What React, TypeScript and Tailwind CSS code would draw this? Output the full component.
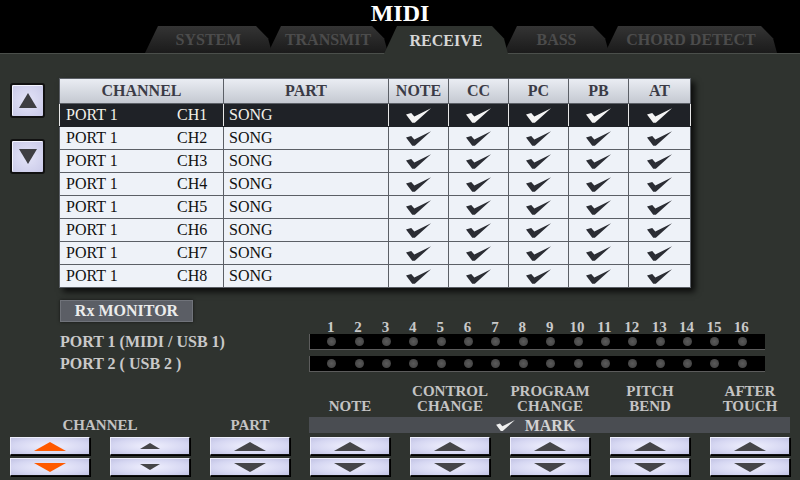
import React from "react";

const tabs = [
  { label: "SYSTEM", w: "w-[127px]" },
  { label: "TRANSMIT", w: "w-[120px]" },
  { label: "RECEIVE", w: "w-[124px]", active: true },
  { label: "BASS", w: "w-[105px]" },
  { label: "CHORD DETECT", w: "w-[172px]" },
];

const flags = ["NOTE", "CC", "PC", "PB", "AT"];

const controls = [
  { label: ["NOTE"] },
  { label: ["CONTROL", "CHANGE"] },
  { label: ["PROGRAM", "CHANGE"] },
  { label: ["PITCH", "BEND"] },
  { label: ["AFTER", "TOUCH"] },
];

function Check({ className }: { className?: string }) {
  return (
    <svg viewBox="0 0 24 14" className={className}>
      <path d="M0 6 L5 4.5 L8 8 L24 0 L8.5 14 L6 14 Z" fill="currentColor" />
    </svg>
  );
}

function Tri({ down, small, orange }: { down?: boolean; small?: boolean; orange?: boolean }) {
  const w = small ? 20 : 32;
  const h = small ? 6 : 9;
  return (
    <svg width={w} height={h} viewBox={`0 0 ${w} ${h}`}>
      <polygon
        points={down ? `0,0 ${w},0 ${w / 2},${h}` : `0,${h} ${w},${h} ${w / 2},0`}
        fill={orange ? "#ff5a00" : "#454548"}
      />
    </svg>
  );
}

function StepButton({ down, small, orange }: { down?: boolean; small?: boolean; orange?: boolean }) {
  return (
    <div className="h-[18px] flex items-center justify-center bg-[radial-gradient(ellipse_at_center,#f0f0fe_0%,#d6d7f2_65%,#c2c3e4_100%)] border border-[#eeeefc] border-b-[#111] border-r-[#111] shadow-[1px_1px_0_#000]">
      <Tri down={down} small={small} orange={orange} />
    </div>
  );
}

function ArrowButton({ down }: { down?: boolean }) {
  return (
    <div className="w-[35px] h-[35px] flex items-center justify-center rounded-[3px] border-2 border-[#111] bg-[radial-gradient(ellipse_at_center,#e4e4f8_0%,#c9c9e8_100%)] shadow-[inset_1px_1px_0_#f4f4ff]">
      <svg width="18" height="15" viewBox="0 0 18 15">
        <polygon points={down ? "0,0 18,0 9,15" : "0,15 18,15 9,0"} fill="#3e3e42" />
      </svg>
    </div>
  );
}

export default function App() {
  const rows = Array.from({ length: 8 }, (_, i) => i + 1);
  const nums = Array.from({ length: 16 }, (_, i) => i + 1);

  return (
    <div className="w-[800px] h-[480px] overflow-hidden flex flex-col bg-[#2f332f] font-['Liberation_Serif','Times_New_Roman',serif]">
      {/* title + tabs */}
      <div className="h-[53px] bg-black flex flex-col shrink-0">
        <div className="text-center text-white font-bold text-[24px] leading-[24px] pt-[1px]">MIDI</div>
        <div className="mt-auto flex pl-[145px] h-[27px]">
          {tabs.map((t, i) => (
            <div
              key={t.label}
              className={`${t.w} ${i === 0 ? "" : "-ml-[4px]"} h-[27px] flex items-center justify-center font-bold text-[16px] pt-[1px] [clip-path:polygon(13px_0,calc(100%-16px)_0,calc(100%-4px)_45%,100%_100%,0_100%)] ${
                t.active
                  ? "relative z-10 bg-[#2f332f] text-[#d6d6d6] h-[28px] -mb-px"
                  : "bg-gradient-to-b from-[#343434] to-[#1b1b1b] text-[#4c4c4c]"
              }`}
            >
              {t.label}
            </div>
          ))}
        </div>
      </div>

      <div className="flex-1 flex flex-col border-t border-[#4b4f4b]">
        {/* table area */}
        <div className="flex pt-[24px]">
          <div className="ml-[10px] mt-[5px] w-[35px] flex flex-col gap-[21px]">
            <ArrowButton />
            <ArrowButton down />
          </div>
          <table className="ml-[14px] w-[631px] table-fixed border-collapse shadow-[4px_4px_6px_rgba(0,0,0,0.75)]">
            <colgroup>
              <col className="w-[164px]" />
              <col className="w-[165px]" />
              <col className="w-[60px]" />
              <col className="w-[60px]" />
              <col className="w-[60px]" />
              <col className="w-[60px]" />
              <col className="w-[62px]" />
            </colgroup>
            <thead>
              <tr className="h-[24px] bg-gradient-to-b from-[#eaedf3] to-[#c3c7d0] text-[#3b3b46] text-[16px] font-bold">
                <th className="border border-[#5b5f66]">CHANNEL</th>
                <th className="border border-[#5b5f66]">PART</th>
                {flags.map((f) => (
                  <th key={f} className="border border-[#5b5f66]">{f}</th>
                ))}
              </tr>
            </thead>
            <tbody>
              {rows.map((r) => {
                const sel = r === 1;
                const cell = sel ? "border border-[#1f2227] border-x-[#e8e8e8]" : "border border-[#5b5f66]";
                return (
                  <tr
                    key={r}
                    className={`h-[23px] text-[16px] leading-none ${sel ? "bg-[#1f2227] text-[#f2f0e8]" : "bg-[#eef2f8] text-[#111]"}`}
                  >
                    <td className={`${cell} pl-[6px]`}>
                      <span className="inline-block w-[111px]">PORT 1</span>CH{r}
                    </td>
                    <td className={`${cell} pl-[5px]`}>SONG</td>
                    {flags.map((f) => (
                      <td key={f} className={cell}>
                        <div className="flex justify-center">
                          <Check className={`w-[25px] h-[15px] ${sel ? "text-[#f4f4f4]" : "text-[#2b2d34]"}`} />
                        </div>
                      </td>
                    ))}
                  </tr>
                );
              })}
            </tbody>
          </table>
        </div>

        {/* Rx monitor */}
        <div className="flex items-end mt-[12px]">
          <div className="ml-[60px] w-[249px] flex flex-col">
            <div className="w-[133px] h-[22px] flex items-center justify-center bg-[#5b5e65] border border-[#70737a] text-[#ececec] font-bold text-[16px] shadow-[0_0_3px_rgba(0,0,0,0.6)]">
              Rx MONITOR
            </div>
            <div className="mt-[12px] h-[16px] flex items-center text-[#c9c9c9] font-bold text-[16px]">PORT 1 (MIDI / USB 1)</div>
            <div className="mt-[6px] h-[16px] flex items-center text-[#c9c9c9] font-bold text-[16px]">PORT 2 ( USB 2 )</div>
          </div>
          <div className="flex flex-col w-[456px]">
            <div className="ml-[8px] w-[438px] grid grid-cols-16 h-[14px] text-[#c9c9c9] font-bold text-[15px] leading-[14px]">
              {nums.map((n) => (
                <div key={n} className="text-center">{n}</div>
              ))}
            </div>
            {[0, 1].map((b) => (
              <div
                key={b}
                className={`${b ? "mt-[6px]" : ""} h-[16px] bg-black border-b border-l border-[#5c5c5c] flex items-center`}
              >
                <div className="ml-[8px] w-[438px] grid grid-cols-16">
                  {nums.map((n) => (
                    <div key={n} className="flex justify-center">
                      <div className="w-[9px] h-[9px] rounded-full bg-[radial-gradient(circle,#5a5a5a_0%,#3e3e3e_100%)]" />
                    </div>
                  ))}
                </div>
              </div>
            ))}
          </div>
        </div>

        {/* bottom controls */}
        <div className="mt-auto mb-[4px] ml-[10px] grid grid-cols-[repeat(8,80px)] gap-x-[20px] gap-y-[4px] text-[#c4c4c4] font-bold text-[15px] leading-[15px]">
          <div className="col-span-2 self-end text-center">CHANNEL</div>
          <div className="self-end text-center">PART</div>
          <div className="col-span-5 flex flex-col">
            <div className="grid grid-cols-[repeat(5,80px)] gap-x-[20px] items-end">
              {controls.map((c) => (
                <div key={c.label.join()} className="text-center -mx-[10px]">
                  {c.label.map((l) => (
                    <div key={l}>{l}</div>
                  ))}
                </div>
              ))}
            </div>
            <div className="mt-[3px] -ml-px h-[16px] bg-[#4a4d52] flex items-center justify-center pr-[28px] gap-[10px]">
              <Check className="w-[19px] h-[11px] text-[#f0f0f0]" />
              <span className="text-[#d2d2d2] text-[16px]">MARK</span>
            </div>
          </div>

          {Array.from({ length: 8 }, (_, i) => (
            <div key={i} className="flex flex-col gap-[3px]">
              <StepButton small={i === 1} orange={i === 0} />
              <StepButton down small={i === 1} orange={i === 0} />
            </div>
          ))}
        </div>
      </div>
    </div>
  );
}
